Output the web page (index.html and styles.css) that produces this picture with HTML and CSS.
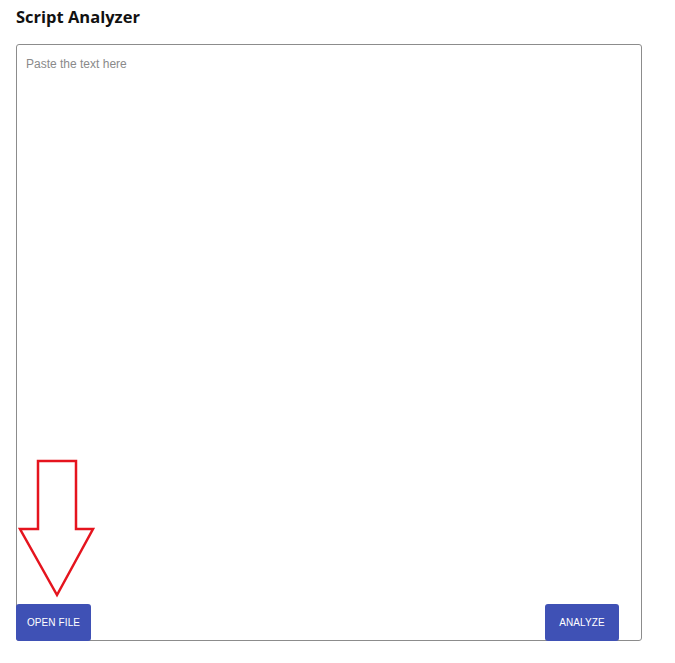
FILE: index.html
```html
<!DOCTYPE html>
<html>
<head>
<meta charset="utf-8">
<link rel="stylesheet" href="styles.css">
</head>
<body>
<div class="page">
  <h1 class="title">Script Analyzer</h1>
  <div class="panel">
    <textarea class="input" placeholder="Paste the text here"></textarea>
    <div class="actions">
      <button class="btn">OPEN FILE</button>
      <button class="btn">ANALYZE</button>
    </div>
    <svg class="arrow" width="80" height="140" viewBox="0 0 80 140">
      <polygon points="20,2 58,2 58,70 75,70 39,136 2,70 20,70" fill="none" stroke="#e5141e" stroke-width="2.5" stroke-linejoin="miter"/>
    </svg>
  </div>
</div>
</body>
</html>
```
FILE: styles.css
```css
html, body { margin: 0; padding: 0; background: #fff; }
.page { padding: 0 0 0 16px; width: 626px; }
.title {
  margin: 0;
  padding-top: 5px;
  height: 44px;
  box-sizing: border-box;
  font-family: "Open Sans", "Segoe UI", sans-serif;
  font-weight: 700;
  font-size: 16.5px;
  line-height: 24px;
  color: #111;
}
.panel {
  position: relative;
  height: 597px;
  box-sizing: border-box;
  border: 1px solid #8c8c8c;
  border-radius: 3px;
  display: flex;
  flex-direction: column;
}
.input {
  flex: 1;
  border: none;
  outline: none;
  resize: none;
  padding: 12px 9px;
  font-family: "Liberation Sans", Arial, sans-serif;
  font-size: 12px;
  color: #333;
  background: transparent;
}
.input::placeholder { color: #8a8a8a; }
.actions {
  display: flex;
  justify-content: space-between;
  padding-right: 22px;
  margin: 0 0 -1px -1px;
}
.btn {
  background: #3f51b5;
  color: #fff;
  border: none;
  border-radius: 3px;
  height: 37px;
  padding: 0;
  font-family: "Liberation Sans", Arial, sans-serif;
  font-size: 10px;
  font-weight: 400;
  letter-spacing: 0.1px;
}
.btn:first-child { width: 75px; }
.btn:last-child { width: 74px; }
.arrow {
  position: absolute;
  left: 1px;
  top: 414px;
  overflow: visible;
}
```
